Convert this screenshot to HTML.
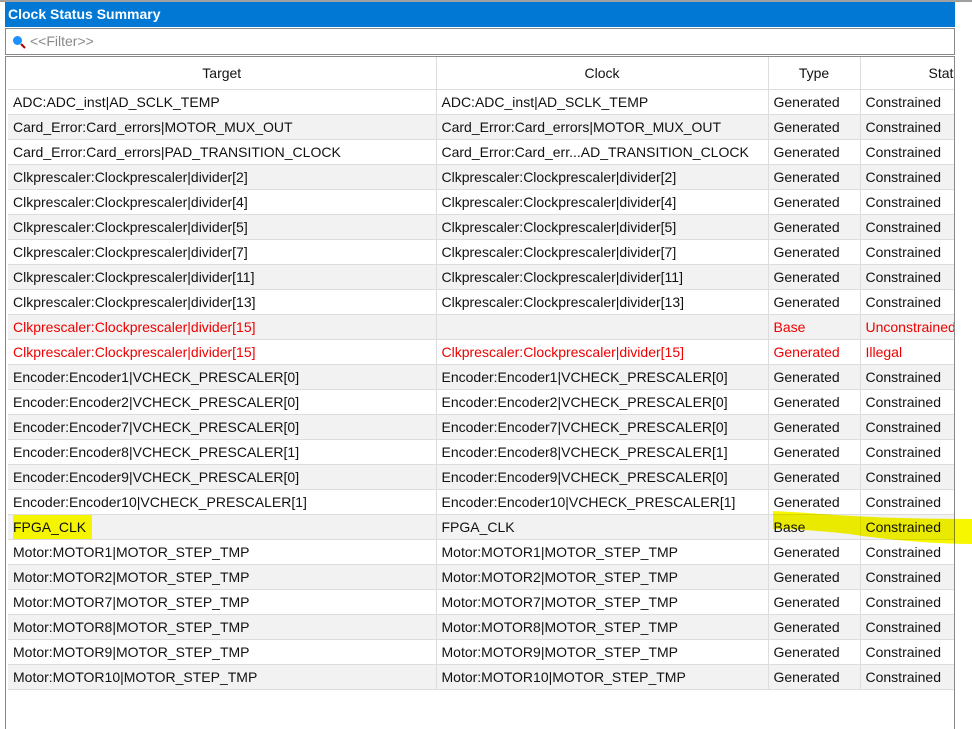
<!DOCTYPE html>
<html><head><style>
body{margin:0;width:972px;height:729px;background:#fff;position:relative;overflow:hidden;font-family:"Liberation Sans",sans-serif;}
#top{position:absolute;left:0;top:0;width:972px;height:2px;background:#a0a0a0}
#title{position:absolute;left:5px;top:2px;width:950px;height:25px;background:#0078d4;color:#fff;font-weight:bold;font-size:14px;line-height:25px;padding-left:3px;box-sizing:border-box}
#filter{position:absolute;left:5px;top:28px;width:950px;height:27px;border:1px solid #888;box-sizing:border-box;color:#888;font-size:14px;line-height:25px;padding-left:24px}
#tbl{position:absolute;left:5px;top:56px;width:950px;height:673px;border:1px solid #888;border-bottom:none;box-sizing:border-box;overflow:hidden}
table{border-collapse:collapse;font-size:14px;table-layout:fixed;position:absolute;left:2px;top:0;width:952px}
td,th{height:24px;border-right:1px solid #ddd;border-bottom:1px solid #ddd;white-space:nowrap;overflow:hidden;padding:0 0 0 5px;color:#111;font-weight:normal}
th{height:32px;text-align:center;padding:0}
tr:nth-child(odd) td{background:#f2f2f2}
.r td{color:#e00}
</style></head><body>
<div id="top"></div>
<div id="title">Clock Status Summary</div>
<div id="filter"><svg style="position:absolute;left:6px;top:6px" width="14" height="14"><circle cx="5.5" cy="5.5" r="4.5" fill="#1e90ff"/><line x1="9" y1="9" x2="13" y2="13" stroke="#a00" stroke-width="2"/></svg>&lt;&lt;Filter&gt;&gt;</div>
<div id="tbl">
<table>
<colgroup><col style="width:428px"><col style="width:332px"><col style="width:92px"><col style="width:100px"></colgroup>
<tr><th>Target</th><th>Clock</th><th>Type</th><th style="text-align:left;padding-left:68px">Status</th></tr>
<tr><td>ADC:ADC_inst|AD_SCLK_TEMP</td><td>ADC:ADC_inst|AD_SCLK_TEMP</td><td>Generated</td><td>Constrained</td></tr>
<tr><td>Card_Error:Card_errors|MOTOR_MUX_OUT</td><td>Card_Error:Card_errors|MOTOR_MUX_OUT</td><td>Generated</td><td>Constrained</td></tr>
<tr><td>Card_Error:Card_errors|PAD_TRANSITION_CLOCK</td><td>Card_Error:Card_err...AD_TRANSITION_CLOCK</td><td>Generated</td><td>Constrained</td></tr>
<tr><td>Clkprescaler:Clockprescaler|divider[2]</td><td>Clkprescaler:Clockprescaler|divider[2]</td><td>Generated</td><td>Constrained</td></tr>
<tr><td>Clkprescaler:Clockprescaler|divider[4]</td><td>Clkprescaler:Clockprescaler|divider[4]</td><td>Generated</td><td>Constrained</td></tr>
<tr><td>Clkprescaler:Clockprescaler|divider[5]</td><td>Clkprescaler:Clockprescaler|divider[5]</td><td>Generated</td><td>Constrained</td></tr>
<tr><td>Clkprescaler:Clockprescaler|divider[7]</td><td>Clkprescaler:Clockprescaler|divider[7]</td><td>Generated</td><td>Constrained</td></tr>
<tr><td>Clkprescaler:Clockprescaler|divider[11]</td><td>Clkprescaler:Clockprescaler|divider[11]</td><td>Generated</td><td>Constrained</td></tr>
<tr><td>Clkprescaler:Clockprescaler|divider[13]</td><td>Clkprescaler:Clockprescaler|divider[13]</td><td>Generated</td><td>Constrained</td></tr>
<tr class="r"><td>Clkprescaler:Clockprescaler|divider[15]</td><td></td><td>Base</td><td>Unconstrained</td></tr>
<tr class="r"><td>Clkprescaler:Clockprescaler|divider[15]</td><td>Clkprescaler:Clockprescaler|divider[15]</td><td>Generated</td><td>Illegal</td></tr>
<tr><td>Encoder:Encoder1|VCHECK_PRESCALER[0]</td><td>Encoder:Encoder1|VCHECK_PRESCALER[0]</td><td>Generated</td><td>Constrained</td></tr>
<tr><td>Encoder:Encoder2|VCHECK_PRESCALER[0]</td><td>Encoder:Encoder2|VCHECK_PRESCALER[0]</td><td>Generated</td><td>Constrained</td></tr>
<tr><td>Encoder:Encoder7|VCHECK_PRESCALER[0]</td><td>Encoder:Encoder7|VCHECK_PRESCALER[0]</td><td>Generated</td><td>Constrained</td></tr>
<tr><td>Encoder:Encoder8|VCHECK_PRESCALER[1]</td><td>Encoder:Encoder8|VCHECK_PRESCALER[1]</td><td>Generated</td><td>Constrained</td></tr>
<tr><td>Encoder:Encoder9|VCHECK_PRESCALER[0]</td><td>Encoder:Encoder9|VCHECK_PRESCALER[0]</td><td>Generated</td><td>Constrained</td></tr>
<tr><td>Encoder:Encoder10|VCHECK_PRESCALER[1]</td><td>Encoder:Encoder10|VCHECK_PRESCALER[1]</td><td>Generated</td><td>Constrained</td></tr>
<tr><td><span style="background:#f5f500;padding:4px 6px 4px 0">FPGA_CLK</span></td><td>FPGA_CLK</td><td>Base</td><td>Constrained</td></tr>
<tr><td>Motor:MOTOR1|MOTOR_STEP_TMP</td><td>Motor:MOTOR1|MOTOR_STEP_TMP</td><td>Generated</td><td>Constrained</td></tr>
<tr><td>Motor:MOTOR2|MOTOR_STEP_TMP</td><td>Motor:MOTOR2|MOTOR_STEP_TMP</td><td>Generated</td><td>Constrained</td></tr>
<tr><td>Motor:MOTOR7|MOTOR_STEP_TMP</td><td>Motor:MOTOR7|MOTOR_STEP_TMP</td><td>Generated</td><td>Constrained</td></tr>
<tr><td>Motor:MOTOR8|MOTOR_STEP_TMP</td><td>Motor:MOTOR8|MOTOR_STEP_TMP</td><td>Generated</td><td>Constrained</td></tr>
<tr><td>Motor:MOTOR9|MOTOR_STEP_TMP</td><td>Motor:MOTOR9|MOTOR_STEP_TMP</td><td>Generated</td><td>Constrained</td></tr>
<tr><td>Motor:MOTOR10|MOTOR_STEP_TMP</td><td>Motor:MOTOR10|MOTOR_STEP_TMP</td><td>Generated</td><td>Constrained</td></tr>
</table>
</div>
<svg style="position:absolute;left:0;top:0;mix-blend-mode:multiply" width="972" height="729"><path d="M773 511 C820 513 860 519 972 519 L972 544 C930 544 880 539 850 534 C820 531 800 529 773 529 Z" fill="#f7f700"/></svg>
</body></html>
